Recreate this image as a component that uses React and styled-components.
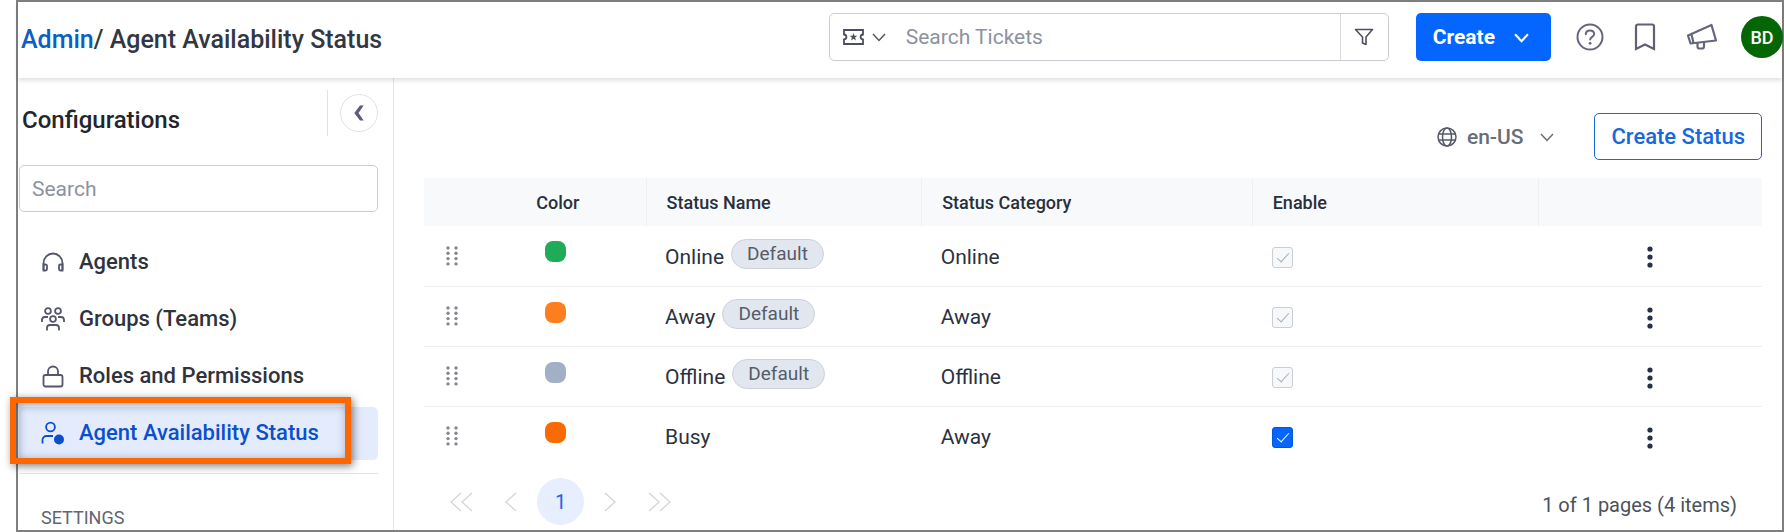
import styled, { createGlobalStyle } from "styled-components";

const navItems = [
  { label: "Agents", icon: "headphones" },
  { label: "Groups (Teams)", icon: "team" },
  { label: "Roles and Permissions", icon: "lock" },
  { label: "Agent Availability Status", icon: "userStatus", active: true },
];

const statuses = [
  { name: "Online", category: "Online", color: "#20ab56", isDefault: true },
  { name: "Away", category: "Away", color: "#fd7e1f", isDefault: true },
  { name: "Offline", category: "Offline", color: "#a3afc4", isDefault: true },
  { name: "Busy", category: "Away", color: "#f96a00", isDefault: false },
];

const App = () => {
  return (
    <Page>
      <GlobalStyle />
      <Frame>
        <TopBar />
        <Body>
          <Sidebar />
          <StatusPage />
        </Body>
      </Frame>
    </Page>
  );
};

export default App;

const TopBar = () => {
  return (
    <Header>
      <Title>
        <a href="#admin">Admin</a>/ Agent Availability Status
      </Title>
      <TicketSearch role="search">
        <ScopeButton type="button" aria-label="Search scope">
          <TicketIcon />
          <Chevron size={14} />
        </ScopeButton>
        <input type="search" aria-label="Search Tickets" placeholder="Search Tickets" />
        <FilterButton type="button" aria-label="Filter">
          <FilterIcon />
        </FilterButton>
      </TicketSearch>
      <CreateButton type="button">
        Create
        <Chevron size={15} weight={2} />
      </CreateButton>
      <Tools>
        <IconButton type="button" aria-label="Help">
          <HelpIcon />
        </IconButton>
        <IconButton type="button" aria-label="Bookmarks">
          <BookmarkIcon />
        </IconButton>
        <IconButton type="button" aria-label="Announcements">
          <MegaphoneIcon />
        </IconButton>
      </Tools>
      <Avatar type="button" aria-label="Profile BD">BD</Avatar>
    </Header>
  );
};

const Sidebar = () => {
  return (
    <Aside>
      <SideHead>
        <h2>Configurations</h2>
        <CollapseWrap>
          <button type="button" aria-label="Collapse sidebar">
            <svg width="10" height="16" viewBox="0 0 10 16">
              <path d="M6 .5h3.700L4.500 8l5.200 7.500H6L.3 8z" fill="#5c5d7a" />
            </svg>
          </button>
        </CollapseWrap>
      </SideHead>
      <SideSearch type="text" aria-label="Search" placeholder="Search" />
      <Nav>
        {navItems.map((item) => (
          <NavItem key={item.label}>
            <NavLink href="#" $active={item.active}>
              <NavIcon name={item.icon} />
              {item.label}
            </NavLink>
            {item.active && <Highlight />}
          </NavItem>
        ))}
      </Nav>
      <Section>SETTINGS</Section>
    </Aside>
  );
};

const StatusPage = () => {
  return (
    <Main>
      <Actions>
        <Language type="button">
          <GlobeIcon />
          en-US
          <Chevron size={14} />
        </Language>
        <OutlineButton type="button">Create Status</OutlineButton>
      </Actions>
      <Table>
        <colgroup>
          <col width="3%" />
          <col width="13.6%" />
          <col width="20.6%" />
          <col width="24.7%" />
          <col width="21.4%" />
          <col />
        </colgroup>
        <thead>
          <tr>
            <th className="grip" aria-label="Reorder" />
            <th className="color">Color</th>
            <th>Status Name</th>
            <th>Status Category</th>
            <th>Enable</th>
            <th aria-label="Actions" />
          </tr>
        </thead>
        <tbody>
          {statuses.map((status) => (
            <tr key={status.name}>
              <td className="grip">
                <DragHandle type="button" aria-label={`Move ${status.name}`}>
                  <GripIcon />
                </DragHandle>
              </td>
              <td className="color">
                <Swatch $color={status.color} />
              </td>
              <td>
                <NameCell>
                  {status.name}
                  {status.isDefault && <Badge>Default</Badge>}
                </NameCell>
              </td>
              <td>{status.category}</td>
              <td className="enable">
                <Checkbox
                  type="checkbox"
                  aria-label={`Enable ${status.name}`}
                  defaultChecked
                  disabled={status.isDefault}
                />
              </td>
              <td className="menu">
                <MenuButton type="button" aria-label={`${status.name} actions`}>
                  <DotsIcon />
                </MenuButton>
              </td>
            </tr>
          ))}
        </tbody>
      </Table>
      <Footer>
        <Pager aria-label="Pagination">
          <EdgeButton type="button" aria-label="First page">
            <PageArrows d="M11 1L1 10l10 9M22 1L12 10l10 9" width={23} />
          </EdgeButton>
          <button type="button" aria-label="Previous page">
            <PageArrows d="M11 1L1 10l10 9" width={12} />
          </button>
          <CurrentPage type="button" aria-current="page">
            1
          </CurrentPage>
          <button type="button" aria-label="Next page">
            <PageArrows d="M1 1l10 9-10 9" width={12} />
          </button>
          <EdgeButton type="button" aria-label="Last page">
            <PageArrows d="M1 1l10 9-10 9M12 1l10 9-10 9" width={23} />
          </EdgeButton>
        </Pager>
        <PageInfo>1 of 1 pages (4 items)</PageInfo>
      </Footer>
    </Main>
  );
};

const Chevron = ({ size, weight = 1.5 }) => (
  <svg width={size} height={size} viewBox="0 0 14 14" fill="none">
    <path d="M1 4l6 6.5L13 4" stroke="currentColor" strokeWidth={weight} />
  </svg>
);

const TicketIcon = () => (
  <svg width="21" height="16" viewBox="0 0 21 16" fill="none">
    <path
      d="M1 1h19v4.500c-1.500.2-2.400 1.200-2.400 2.500s.9 2.300 2.400 2.500V15H1v-4.500c1.500-.2 2.400-1.200 2.400-2.500S2.500 5.700 1 5.500z"
      stroke="#4c4d63"
      strokeWidth="1.800"
    />
    <path
      d="M10.500 4l1 2.700 2.900.1-2.300 1.800.8 2.800-2.400-1.600-2.400 1.600.8-2.800-2.300-1.800 2.900-.1z"
      fill="#4c4d63"
    />
  </svg>
);

const FilterIcon = () => (
  <svg width="20" height="18" viewBox="0 0 20 18" fill="none" stroke="#4f5060" strokeWidth="1.6">
    <path d="M1.500 1.500h17l-6.500 7.500v7.500l-3.500-1.500V9z" strokeLinejoin="round" />
  </svg>
);

const HelpIcon = () => (
  <svg width="28" height="28" viewBox="0 0 28 28" fill="none" stroke="#65667e" strokeWidth="2">
    <circle cx="14" cy="14" r="12.500" />
    <path d="M9.800 11.300c0-2.300 1.800-3.900 4.200-3.900s4.200 1.500 4.200 3.700c0 2.700-4 2.900-4 5.400" strokeLinecap="round" />
    <circle cx="14.100" cy="20.300" r="1.400" fill="#65667e" stroke="none" />
  </svg>
);

const BookmarkIcon = () => (
  <svg width="22" height="28" viewBox="0 0 22 28" fill="none">
    <path
      d="M2 26V3.500A2 2 0 0 1 4 1.500h14a2 2 0 0 1 2 2V26l-9-4.500z"
      stroke="#5f6074"
      strokeWidth="2.200"
    />
  </svg>
);

const MegaphoneIcon = () => (
  <svg width="32" height="28" viewBox="0 0 32 28" fill="none" stroke="#65667e" strokeWidth="2.200">
    <path d="M2 12.500L25.500 2 30 17.500 4.500 20.500z" strokeLinejoin="round" />
    <path d="M5.500 11.500l2 8.500" />
    <path d="M11.500 20v3.500a2 2 0 0 0 2 2h2.500a2 2 0 0 0 2-2V19" />
  </svg>
);

const GlobeIcon = () => (
  <svg width="20" height="20" viewBox="0 0 20 20" fill="none" stroke="#55586a" strokeWidth="1.500">
    <circle cx="10" cy="10" r="9" />
    <ellipse cx="10" cy="10" rx="4.500" ry="9" />
    <path d="M1.800 7h16.400M1.800 13h16.400" />
  </svg>
);

const GripIcon = () => (
  <svg width="12" height="20" viewBox="0 0 12 20" fill="#85878c">
    {[2, 7.3, 12.6, 17.9].map((y) => (
      <g key={y}>
        <circle cx="2" cy={y} r="1.700" />
        <circle cx="10" cy={y} r="1.700" />
      </g>
    ))}
  </svg>
);

const DotsIcon = () => (
  <svg width="6" height="22" viewBox="0 0 6 22" fill="#263145">
    <circle cx="3" cy="3" r="2.600" />
    <circle cx="3" cy="11" r="2.600" />
    <circle cx="3" cy="19" r="2.600" />
  </svg>
);

const PageArrows = ({ d, width }) => (
  <svg width={width} height="20" viewBox={`0 0 ${width} 20`} fill="none">
    <path d={d} stroke="#d3d5d9" strokeWidth="1.300" />
  </svg>
);

const NavIcon = ({ name }) => (
  <svg width="24" height="24" viewBox="0 0 24 24" fill="none" stroke="currentColor" strokeWidth="1.800">
    {name === "headphones" && (
      <>
        <path d="M2.500 20v-7a9.500 9.500 0 0 1 19 0v7" />
        <path d="M2.500 14.500h2a1.500 1.500 0 0 1 1.500 1.500v3a1.500 1.500 0 0 1-1.500 1.500h-2zM21.500 14.500h-2a1.500 1.500 0 0 0-1.500 1.500v3a1.500 1.500 0 0 0 1.500 1.500h2z" />
      </>
    )}
    {name === "team" && (
      <>
        <circle cx="7" cy="4" r="2.900" />
        <circle cx="17" cy="4" r="2.900" />
        <circle cx="12" cy="12" r="2.900" />
        <path d="M1 15v-2a3 3 0 0 1 3-3h3M23 15v-2a3 3 0 0 0-3-3h-3" />
        <path d="M6 23.500V21a3 3 0 0 1 3-3h6a3 3 0 0 1 3 3v2.500" />
      </>
    )}
    {name === "lock" && (
      <>
        <rect x="2.500" y="11" width="19" height="11.500" rx="2" />
        <path d="M7 11V7.500a5 5 0 0 1 10 0V11" />
      </>
    )}
    {name === "userStatus" && (
      <>
        <circle cx="9.500" cy="6" r="4.400" />
        <path d="M1.500 22.500V19a4 4 0 0 1 4-4H12" />
        <circle cx="18" cy="18.500" r="5" fill="currentColor" stroke="none" />
      </>
    )}
  </svg>
);

const GlobalStyle = createGlobalStyle`
  * {
    box-sizing: border-box;
  }
  body {
    margin: 0;
    background: #fff;
    color: #2b3240;
    font-family: Roboto, "Liberation Sans", sans-serif;
    font-size: 20px;
  }
  h1, h2, p {
    margin: 0;
  }
  button, input {
    font: inherit;
    color: inherit;
  }
  button {
    display: flex;
    align-items: center;
    justify-content: center;
    padding: 0;
    border: 0;
    background: none;
    cursor: pointer;
  }
  svg {
    display: block;
    flex-shrink: 0;
  }
`;

const Page = styled.div`
  padding-left: 16px;
  height: 100vh;
`;

const Frame = styled.div`
  display: flex;
  flex-direction: column;
  height: 100%;
  overflow: clip;
  overflow-clip-margin: 24px;
  border: 2px solid #808080;
`;

const Header = styled.header`
  display: flex;
  align-items: center;
  flex-shrink: 0;
  height: 76px;
  padding: 0 0 6px 3px;
  background: #fff;
  box-shadow: 0 2px 5px rgba(0, 0, 0, 0.14);
  z-index: 1;
`;

const Title = styled.h1`
  flex: 1;
  padding-top: 5px;
  font-size: 25px;
  font-weight: 500;
  white-space: nowrap;
  color: #323744;
  a {
    color: #0b5fc4;
    text-decoration: none;
  }
`;

const TicketSearch = styled.div`
  display: flex;
  width: 560px;
  height: 48px;
  border: 1px solid #c9ccd1;
  border-radius: 5px;
  input {
    flex: 1;
    min-width: 0;
    padding: 0;
    border: 0;
    outline: 0;
    font-size: 21px;
    background: none;
  }
  input::placeholder {
    color: #8d92a0;
  }
`;

const ScopeButton = styled.button`
  gap: 8px;
  padding: 0 20px 0 13px;
  color: #55566a;
`;

const FilterButton = styled.button`
  width: 48px;
  border-left: 1px solid #d9dbdf;
`;

const CreateButton = styled.button`
  gap: 19px;
  height: 48px;
  margin-left: 27px;
  padding: 0 22px 0 17px;
  border-radius: 5px;
  background: #0565ff;
  color: #fff;
  font-size: 21px;
  font-weight: 700;
`;

const Tools = styled.div`
  display: flex;
  align-items: center;
  gap: 30px;
  margin: 0 23px 0 25px;
`;

const IconButton = styled.button`
  height: 30px;
`;

const Avatar = styled.button`
  flex-shrink: 0;
  width: 42px;
  height: 42px;
  margin-right: -1px;
  border-radius: 50%;
  background: #056605;
  color: #fff;
  font-size: 18px;
  font-weight: 500;
`;

const Body = styled.div`
  display: flex;
  flex: 1;
  min-height: 0;
`;

const Aside = styled.aside`
  flex-shrink: 0;
  width: 376px;
  padding: 12px 15px 0 1px;
  border-right: 1px solid #e3e5e8;
`;

const SideHead = styled.div`
  display: flex;
  align-items: center;
  justify-content: space-between;
  height: 46px;
  padding-left: 3px;
  h2 {
    padding-top: 14px;
    font-size: 24px;
    font-weight: 500;
    color: #22252c;
  }
`;

const CollapseWrap = styled.div`
  display: flex;
  align-items: center;
  height: 46px;
  padding-left: 12px;
  border-left: 1px solid #e0e2e6;
  button {
    width: 38px;
    height: 38px;
    border: 1px solid #e0e2e6;
    border-radius: 50%;
  }
`;

const SideSearch = styled.input`
  width: 100%;
  height: 47px;
  margin-top: 29px;
  padding: 0 12px;
  border: 1px solid #c9ccd1;
  border-radius: 5px;
  font-size: 21px;
  &::placeholder {
    color: #8d92a0;
  }
`;

const Nav = styled.nav`
  display: flex;
  flex-direction: column;
  gap: 4px;
  margin-top: 24px;
  padding-bottom: 13px;
  border-bottom: 1px solid #e3e5e8;
`;

const NavItem = styled.div`
  position: relative;
`;

const NavLink = styled.a`
  display: flex;
  align-items: center;
  gap: 14px;
  height: 53px;
  padding: 0 0 2px 22px;
  border-radius: 5px;
  background: ${({ $active }) => ($active ? "#e4ebfd" : "none")};
  color: ${({ $active }) => ($active ? "#0a50cc" : "#2f333d")};
  font-size: 22px;
  font-weight: 500;
  text-decoration: none;
  white-space: nowrap;
  svg {
    color: ${({ $active }) => ($active ? "#0a50cc" : "#54566a")};
  }
`;

const Highlight = styled.span`
  position: absolute;
  inset: -10px 27px -4px -9px;
  border: 6px solid #fe6600;
  box-shadow: 2px 2px 8px rgba(0, 0, 0, 0.5), inset 2px 2px 10px rgba(30, 60, 100, 0.5);
  pointer-events: none;
`;

const Section = styled.p`
  padding: 33px 0 0 22px;
  font-size: 18px;
  line-height: 22px;
  color: #62656e;
`;

const Main = styled.main`
  display: flex;
  flex-direction: column;
  flex: 1;
  min-width: 0;
  padding: 35px 20px 0 30px;
`;

const Actions = styled.div`
  display: flex;
  justify-content: flex-end;
  gap: 40px;
  margin-bottom: 18px;
`;

const Language = styled.button`
  gap: 10px;
  color: #686d78;
  font-size: 21px;
  font-weight: 500;
  svg:last-child {
    margin-left: 7px;
  }
`;

const OutlineButton = styled.button`
  height: 47px;
  padding: 0 16px;
  border: 1px solid #1668dc;
  border-radius: 5px;
  color: #1668dc;
  font-size: 22px;
  font-weight: 500;
`;

const Table = styled.table`
  width: 100%;
  table-layout: fixed;
  border-collapse: collapse;
  th {
    height: 48px;
    padding: 0 20px;
    border-right: 1px solid #eef0f3;
    background: #f8f9fb;
    color: #28303c;
    font-size: 18px;
    font-weight: 500;
    text-align: left;
  }
  th:first-child, th:last-child {
    border-right: 0;
  }
  td {
    height: 60px;
    padding: 2px 19px 0;
    font-size: 21px;
  }
  tbody tr + tr td {
    border-top: 1px solid #eceef0;
  }
  .grip {
    padding: 0 0 0 22px;
  }
  .color {
    padding: 0;
    text-align: center;
  }
  th.color {
    padding-left: 6px;
  }
  td.color {
    padding-bottom: 8px;
  }
  .enable {
    padding: 3px 20px 0;
  }
  .menu {
    padding: 3px 0 0;
  }
`;

const DragHandle = styled.button`
  cursor: grab;
`;

const Swatch = styled.span`
  display: block;
  width: 21px;
  height: 21px;
  margin: 0 auto;
  border-radius: 8px;
  background: ${({ $color }) => $color};
`;

const NameCell = styled.div`
  display: flex;
  align-items: center;
  gap: 7px;
`;

const Badge = styled.span`
  margin-bottom: 6px;
  padding: 0 15px;
  border: 1px solid #cdd1da;
  border-radius: 15px;
  background: #e2e7ef;
  color: #565c68;
  font-size: 19px;
  line-height: 28px;
`;

const Checkbox = styled.input`
  appearance: none;
  display: block;
  width: 21px;
  height: 21px;
  margin: 0;
  border: 1px solid #0455d9;
  border-radius: 3px;
  background: #0565ff;
  &::after {
    content: "";
    display: block;
    width: 5px;
    height: 11px;
    margin: 2px 0 0 7px;
    border: solid #fff;
    border-width: 0 1px 1px 0;
    transform: rotate(42deg);
  }
  &:disabled {
    border-color: #c9ced6;
    background: #f6f8fa;
  }
  &:disabled::after {
    border-color: #a9adb4;
  }
`;

const MenuButton = styled.button`
  width: 30px;
  margin: 0 auto;
`;

const Footer = styled.div`
  display: flex;
  align-items: center;
  justify-content: space-between;
  margin-top: 12px;
  padding: 0 25px 0 26px;
  color: #4b515d;
`;

const Pager = styled.nav`
  display: flex;
  align-items: center;
  gap: 20px;
`;

const EdgeButton = styled.button`
  &:first-child {
    margin-right: 12px;
  }
  &:last-child {
    margin-left: 12px;
  }
`;

const CurrentPage = styled.button`
  width: 47px;
  height: 47px;
  border-radius: 50%;
  background: #e7eefe;
  color: #2563eb;
`;

const PageInfo = styled.p`
  padding-top: 6px;
`;
